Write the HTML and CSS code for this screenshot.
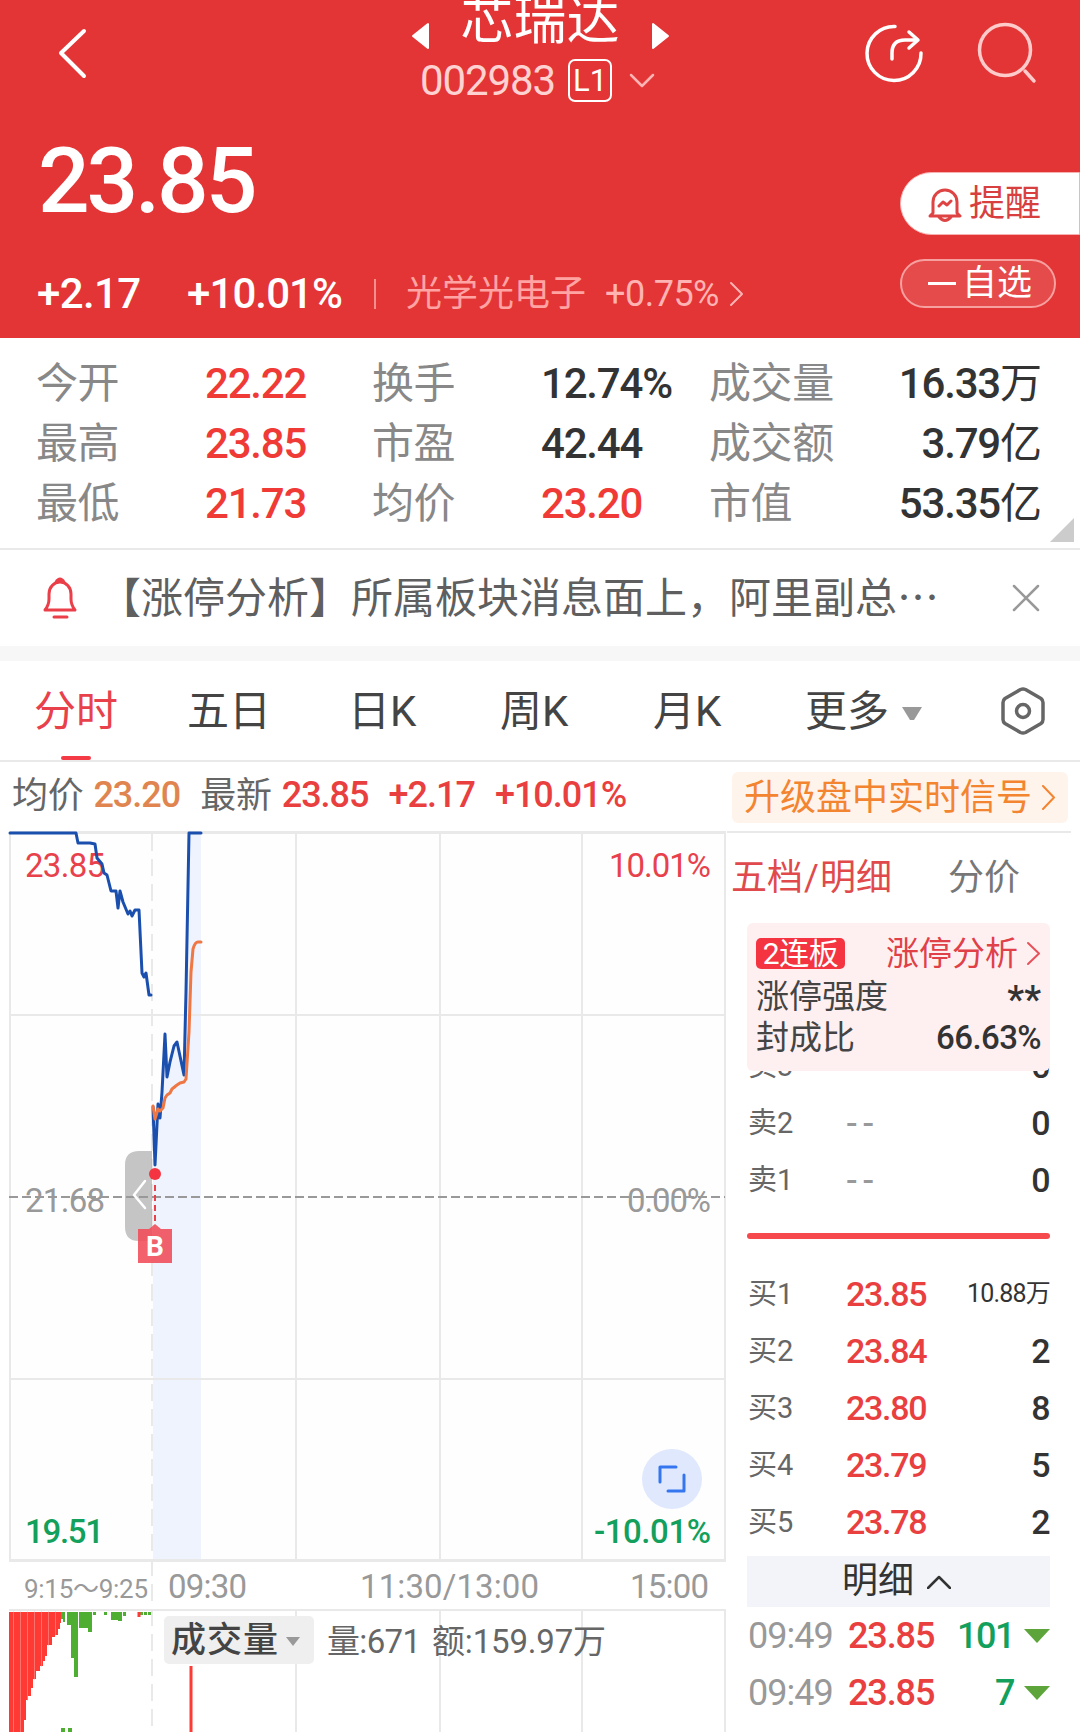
FILE: index.html
```html
<!DOCTYPE html>
<html lang="zh-CN">
<head>
  <meta charset="UTF-8">
  <title>芯瑞达 002983</title>
  <meta name="viewport" content="width=device-width,initial-scale=1">
  <link rel="stylesheet" href="styles.css">
</head>
<body>
  <!-- Header -->
  <header class="header">
    <div class="navbar">
      <svg class="back" width="34" height="56" viewBox="0 0 34 56"><path d="M29 6 6 28 29 51"/></svg>
      <div class="stock">
        <div class="stock-name">
          <svg width="18" height="28" viewBox="0 0 18 28"><path d="M17 2v24L2 14z"/></svg>
          <h1>芯瑞达</h1>
          <svg width="18" height="28" viewBox="0 0 18 28"><path d="M1 2v24l15-12z"/></svg>
        </div>
        <div class="stock-code">
          <span class="code">002983</span>
          <span class="level">L1</span>
          <svg width="26" height="16" viewBox="0 0 26 16"><path d="M2 2l11 11L24 2"/></svg>
        </div>
      </div>
      <div class="nav-icons">
        <svg width="62" height="62" viewBox="0 0 62 62">
          <path d="M32 4.500A27 27 0 1 0 58 31"/>
          <path d="M29 37v-6q0-13 13-13h11M46 10l9 8-9 8"/>
        </svg>
        <svg class="search" width="62" height="62" viewBox="0 0 62 62">
          <circle cx="29" cy="28" r="25.500"/><path d="M49 49l9 10"/>
        </svg>
      </div>
    </div>
    <div class="quote">
      <div class="quote-left">
        <div class="price">23.85</div>
        <div class="change-row">
          <span class="change">+2.17</span>
          <span class="change pct">+10.01%</span>
          <i class="divider"></i>
          <span class="sector">光学光电子</span>
          <span class="sector-pct">+0.75%</span>
          <svg width="16" height="26" viewBox="0 0 16 26"><path d="M2 2l11 11L2 24"/></svg>
        </div>
      </div>
      <div class="quote-actions">
        <div class="btn-alert">
          <svg width="34" height="36" viewBox="0 0 34 36">
            <path d="M5 27V16a12 12 0 0 1 24 0v11l3 3H2zM11 31q6 7 12 0M11 20l4-4 4 3 4-4"/>
          </svg>
          <span>提醒</span>
        </div>
        <div class="btn-fav"><i></i><span>自选</span></div>
      </div>
    </div>
  </header>

  <!-- Key numbers -->
  <section class="stats">
    <span class="k">今开</span><span class="v up">22.22</span>
    <span class="k">换手</span><span class="v">12.74%</span>
    <span class="k">成交量</span><span class="v last">16.33<small>万</small></span>
    <span class="k">最高</span><span class="v up">23.85</span>
    <span class="k">市盈</span><span class="v">42.44</span>
    <span class="k">成交额</span><span class="v last">3.79<small>亿</small></span>
    <span class="k">最低</span><span class="v up">21.73</span>
    <span class="k">均价</span><span class="v up">23.20</span>
    <span class="k">市值</span><span class="v last">53.35<small>亿</small></span>
    <i class="corner"></i>
  </section>

  <section class="notice">
    <svg width="36" height="44" viewBox="0 0 36 44">
      <path d="M3 34q4-5 4-11v-5a11 12 0 0 1 22 0v5q0 6 4 11zM14 6q4-6 8 0M12 41h13"/>
    </svg>
    <p>【涨停分析】所属板块消息面上，阿里副总<span class="dots">⋯</span></p>
    <svg class="close" width="30" height="30" viewBox="0 0 30 30"><path d="M3 3l24 24M27 3L3 27"/></svg>
  </section>

  <!-- Period tabs -->
  <nav class="tabs">
    <span class="tab active">分时</span>
    <span class="tab">五日</span>
    <span class="tab">日K</span>
    <span class="tab">周K</span>
    <span class="tab">月K</span>
    <span class="tab">更多<i class="caret"></i></span>
    <svg width="46" height="50" viewBox="0 0 46 50">
      <path d="M20.500 3.500q2.500-1 5 0L41 12.500q2 1.500 2 4v17q0 2.500-2 4L25.500 46.500q-2.500 1-5 0L5 37.500q-2-1.500-2-4v-17q0-2.500 2-4z"/>
      <circle cx="23" cy="25" r="6.500"/>
    </svg>
  </nav>

  <div class="info">
    <span class="label">均价</span><span class="num avg">23.20</span>
    <span class="label">最新</span><span class="num">23.85</span>
    <span class="num">+2.17</span><span class="num">+10.01%</span>
    <div class="upgrade">升级盘中实时信号
      <svg width="15" height="25" viewBox="0 0 15 25"><path d="M2 1l11 11.500L2 24"/></svg>
    </div>
  </div>

  <main class="main">
    <!-- Intraday chart, user units are page pixels -->
    <svg class="chart" width="727" height="901" viewBox="0 831 727 901">
      <rect class="plot" x="10" y="832" width="715" height="728"/>
      <path class="area" d="M153 1560V1107L155 1165 158 1104 160 1118 162 1092 165 1034 167 1077 170 1062 174 1046 177 1042 184 1075 186 992 189 833H201V1560z"/>
      <g class="grid">
        <path d="M9 832.500H726M9 1560.500H726" stroke-width="3"/>
        <path d="M10 1015H725M10 1379H725M10 832V1560M296 832V1560M440 832V1560M582 832V1560M725 832V1560"/>
        <path d="M9 1610H726M296 1610V1732M440 1610V1732M582 1610V1732M725 1610V1732"/>
        <path d="M152 834V1732" stroke-dasharray="17 8"/>
      </g>

      <g class="axis-label">
        <text class="up" x="25" y="877" textLength="80">23.85</text>
        <text class="up" x="609" y="877" textLength="102">10.01%</text>
        <text x="25" y="1212" textLength="80">21.68</text>
        <text x="627" y="1212" textLength="84">0.00%</text>
        <text class="down" x="25" y="1543" textLength="79">19.51</text>
        <text class="down" x="594" y="1543" textLength="117">-10.01%</text>
        <text x="168" y="1598" textLength="79">09:30</text>
        <text x="360" y="1598" textLength="179">11:30/13:00</text>
        <text x="630" y="1598" textLength="79">15:00</text>
        <text class="small" x="24" y="1598" textLength="124">9:15～9:25</text>
      </g>
      <path class="zero" d="M9 1197H725"/>

      <path class="line" d="M10 833H76L78 843H90L95 844 97 858 102 864 104 873 107 875 111 891H116L118 908 120 891 123 902 128 914 130 911 132 916 135 910H139L142 973 144 977 146 973 149 995H151"/>
      <path class="line" d="M153 1107L155 1165 158 1104 160 1118 162 1092 165 1034 167 1077 170 1062 174 1046 177 1042 184 1075 186 992 189 833H201"/>
      <path class="line avg-line" d="M153 1106L155 1119 158 1109 160 1111 163 1108 165 1098 167 1095 170 1093 172 1089 177 1085 180 1083 184 1082 186 1079 189 1032 191 972 193 949Q195 942 198 942H201"/>

      <!-- Collapse handle and buy marker -->
      <path class="handle" d="M152 1151H139Q125 1151 125 1165V1227Q125 1241 139 1241H152z"/>
      <path class="handle-arrow" d="M145 1181L134 1195 145 1208"/>
      <circle class="dot" cx="155" cy="1174" r="6"/>
      <path class="buy-line" d="M155 1185V1222"/>
      <path class="buy" d="M138 1229H149L155 1224 161 1229H172V1263H138z"/>
      <text class="buy-text" x="155" y="1256">B</text>

      <circle class="full" cx="672" cy="1479" r="30"/>
      <path class="full-icon" d="M660 1482V1467H676M684 1475V1491H668"/>

      <!-- Volume -->
      <path class="vol-up" d="M9 1612H61V1623H60V1629H58V1635H55V1637H52V1645H47V1656H45V1661H43V1666H40V1671H36V1679H33V1688H31V1696H28V1700H26V1720H24V1732H9z"/>
      <path class="vol-gap" d="M13.500 1612V1732M20.500 1612V1732M27.500 1612V1700M34.500 1612V1679M41.500 1612V1666M48.500 1612V1645M55.500 1612V1635"/>
      <path class="vol-down" d="M61 1612h4v10h-2v-3h-2zM67 1612h11v65h-4v-19h-3v-33h-4zM79 1612h13v20h-4v-4h-9zM93 1612h3v3h-3zM104 1612h3v3h-3zM111 1612h11v9h-4v-1h-7zM123 1612h3v4h-3zM140 1612h3v3h-3zM144 1612h3v3h-3zM148 1612h3v3h-3zM61 1728h4v4h-4zM68 1728h4v4h-4z"/>
      <path class="vol-up" d="M137.500 1612h3v5h-3zM189.500 1666h3v66h-3z"/>
      <rect class="vol-btn" x="164" y="1616" width="150" height="48" rx="5"/>
      <text class="vol-name" x="171" y="1652" textLength="107">成交量</text>
      <path class="vol-caret" d="M286 1637H300L293 1646z"/>
      <text class="vol-text" x="327" y="1653" textLength="94">量:671</text>
      <text class="vol-text" x="432" y="1653" textLength="174">额:159.97万</text>
    </svg>

    <!-- Order book -->
    <aside class="book">
      <div class="book-tabs"><span class="active">五档<i>/</i>明细</span><span>分价</span></div>
      <div class="limit-card">
        <div class="limit-row head">
          <span class="limit-badge">2连板</span>
          <span class="limit-link">涨停分析
            <svg width="15" height="25" viewBox="0 0 15 25"><path d="M2 2l11 10.500L2 23"/></svg>
          </span>
        </div>
        <div class="limit-row"><span>涨停强度</span><b class="stars">**</b></div>
        <div class="limit-row"><span>封成比</span><b>66.63%</b></div>
      </div>
      <div class="orders">
        <div class="order"><span>卖3</span><em class="none">--</em><b>0</b></div>
        <div class="order"><span>卖2</span><em class="none">--</em><b>0</b></div>
        <div class="order"><span>卖1</span><em class="none">--</em><b>0</b></div>
      </div>
      <div class="split"></div>
      <div class="orders">
        <div class="order"><span>买1</span><em>23.85</em><b class="long">10.88万</b></div>
        <div class="order"><span>买2</span><em>23.84</em><b>2</b></div>
        <div class="order"><span>买3</span><em>23.80</em><b>8</b></div>
        <div class="order"><span>买4</span><em>23.79</em><b>5</b></div>
        <div class="order"><span>买5</span><em>23.78</em><b>2</b></div>
      </div>
      <div class="detail-bar">明细
        <svg width="24" height="14" viewBox="0 0 24 14"><path d="M1 13L12 2l11 11"/></svg>
      </div>
      <div class="tick"><span>09:49</span><em>23.85</em><b>101</b><i></i></div>
      <div class="tick"><span>09:49</span><em>23.85</em><b>7</b><i></i></div>
    </aside>
  </main>
</body>
</html>
```
FILE: styles.css
```css
:root {
  --red: #e33536;
  --up: #e9403f;
  --down: #12a05c;
  --text: #333;
  --muted: #888;
  --line: #e9e9e9;
}
* { box-sizing: border-box; margin: 0; padding: 0; }
body {
  width: 1080px; height: 1732px; overflow: hidden;
  background: #fff; color: var(--text);
  font-family: Roboto, "Noto Sans CJK SC", sans-serif;
}
svg { display: block; flex: none; fill: none; stroke-linecap: round; stroke-linejoin: round; }
i, em { font-style: normal; }
b { font-weight: 500; }

/* Header */
.header { height: 338px; background: var(--red); color: #fff; }
.navbar {
  height: 110px; display: grid; grid-template-columns: 380px 320px 1fr;
}
.back { margin: 25px 0 0 55px; stroke: #fff; stroke-width: 4; }
.stock-name {
  height: 58px; display: flex; justify-content: center; gap: 32px;
}
.stock-name svg { margin-top: 22px; fill: #fff; stroke: #fff; stroke-width: 2; }
.stock-name h1 {
  font-size: 53px; font-weight: 400; line-height: 58px; margin-top: -8px;
}
.stock-code {
  display: flex; align-items: center; height: 45px; padding-left: 40px;
}
.code {
  width: 148px; font-size: 42px; line-height: 45px; color: #ffd2d2; letter-spacing: -1.1px;
}
.level {
  width: 44px; height: 43px; border: 2px solid #fff; border-radius: 7px;
  font-size: 31px; line-height: 39px; text-align: center; margin-right: 17px;
}
.stock-code svg { stroke: #ffb4b4; stroke-width: 2.5; }
.nav-icons { display: flex; gap: 51px; padding: 22px 0 0 163px; }
.nav-icons svg { stroke: #fff; stroke-width: 3.5; }
.nav-icons .search { stroke: #ffcaca; }

.quote { display: flex; justify-content: space-between; }
.price {
  height: 140px; padding: 16px 0 0 38px;
  font-size: 91px; line-height: 110px; font-weight: 500; letter-spacing: -3.2px;
}
.change-row { display: flex; align-items: center; height: 86px; padding: 1px 0 0 37px; }
.change { width: 150px; font-size: 42px; font-weight: 500; letter-spacing: -0.6px; line-height: 50px; }
.change.pct { width: 187px; letter-spacing: -0.9px; }
.divider { width: 2px; height: 30px; background: #f18f8f; margin-right: 30px; }
.sector { width: 199px; font-size: 36px; color: #ffa3a3; line-height: 50px; }
.sector-pct { width: 124px; font-size: 36px; color: #ffb3b3; line-height: 50px; letter-spacing: -0.5px; }
.change-row svg { stroke: #ffb3b3; stroke-width: 2; }
.quote-actions { width: 180px; padding-top: 62px; }
.btn-alert {
  display: flex; align-items: center; height: 63px; padding-left: 27px; gap: 7px;
  background: #fff; color: #d8403f; border: 1px solid #f7b1b1; border-radius: 32px 0 0 32px;
  font-size: 36px; line-height: 62px;
}
.btn-alert svg { stroke: #df4444; stroke-width: 3; }
.btn-fav {
  display: flex; align-items: center; width: 156px; height: 49px; margin-top: 24px;
  padding-left: 26px; gap: 6px; border: 2px solid #f7a0a0; border-radius: 25px;
  background: #e64b4c; font-size: 35px; line-height: 44px;
}
.btn-fav i { width: 28px; height: 3px; background: #fff; }

/* Key numbers */
.stats {
  position: relative; height: 212px; padding: 16px 38px 0 36px;
  border-bottom: 2px solid var(--line);
  display: grid; grid-template-columns: 169px 167px 169px 168px 140px 1fr;
  grid-auto-rows: 60px; line-height: 60px;
}
.k { font-size: 42px; color: var(--muted); letter-spacing: -0.4px; }
.v { font-size: 42px; font-weight: 500; letter-spacing: -1.2px; white-space: nowrap; }
.v small { font-size: 42px; font-weight: 400; letter-spacing: 0; }
.v.last { text-align: right; }
.v.up { color: #f03a36; }
.corner {
  position: absolute; right: 6px; bottom: 6px; width: 24px; height: 24px;
  background: #ccc; clip-path: polygon(100% 0, 100% 100%, 0 100%);
}

.notice {
  display: flex; align-items: center; height: 111px;
  border-bottom: 15px solid #f7f7f7; padding-left: 42px;
}
.notice svg { stroke: #ea3f48; stroke-width: 3; }
.notice p { width: 933px; padding: 2px 0 0 21px; font-size: 42px; line-height: 60px; color: #5f5f5f; white-space: nowrap; }
.notice .close { stroke: #999; stroke-width: 2.5; }

/* Tabs */
.tabs {
  display: grid; grid-template-columns: 153px 161px 152px 153px 152px 196px 1fr;
  align-items: center; height: 101px; padding-left: 34px; border-bottom: 2px solid var(--line);
}
.tab { position: relative; font-size: 42px; line-height: 99px; color: #444; white-space: nowrap; padding-top: 1px; height: 99px; }
.tab.active { color: #e8414b; }
.tab.active::after {
  content: ""; position: absolute; left: 27px; bottom: 0;
  width: 30px; height: 4px; border-radius: 2px; background: #f43a44;
}
.caret {
  display: inline-block; width: 20px; height: 13px; margin-left: 13px; vertical-align: 6px;
  background: #999; clip-path: polygon(0 0, 100% 0, 60% 100%, 40% 100%);
}
.tabs svg { stroke: #666; stroke-width: 3.5; margin-left: -1px; }

.info {
  display: flex; align-items: center; height: 69px; padding: 0 12px;
  font-size: 36px; line-height: 60px;
}
.label { color: #666; margin-right: 10px; letter-spacing: -0.3px; padding-bottom: 1px; }
.num { color: var(--up); font-size: 36px; font-weight: 500; letter-spacing: -1px; margin: 0 20px 3px 0; }
.num.avg { color: #e08550; }
.upgrade {
  display: flex; align-items: center; gap: 9px; width: 336px; height: 51px; margin: 2px 0 0 auto;
  padding-left: 12px; border-radius: 6px; background: #fff4ec; color: #f38430;
  font-size: 36px; white-space: nowrap;
}
.upgrade svg { stroke: #f38430; stroke-width: 2; }

/* Chart */
.main { display: flex; height: 901px; }
.plot { fill: #fefefe; }
.area { fill: #eef3fd; }
.grid { stroke: var(--line); stroke-width: 2; stroke-linecap: butt; }
.axis-label { font-size: 33px; fill: #999; }
.axis-label .up { fill: #e8414b; }
.axis-label .down { fill: var(--down); font-weight: 500; }
.axis-label .small { font-size: 26px; }
.zero { stroke: #999; stroke-width: 2; stroke-dasharray: 9 4; stroke-linecap: butt; }
.line { stroke: #1b4fae; stroke-width: 3; }
.avg-line { stroke: #ee7744; }
.handle { fill: #999; fill-opacity: .57; }
.handle-arrow { stroke: #fff; stroke-width: 2.5; }
.dot { fill: #f43541; }
.buy-line { stroke: #e8414b; stroke-width: 2; stroke-dasharray: 6 4; stroke-linecap: butt; }
.buy { fill: #f04b58; fill-opacity: .88; }
.buy-text { fill: #fff; font-size: 28px; font-weight: 700; text-anchor: middle; }
.full { fill: #dfe8fd; }
.full-icon { stroke: #3576f0; stroke-width: 3; }
.vol-up { fill: #ff3a35; }
.vol-gap { stroke: #ff8a85; stroke-width: .7; }
.vol-down { fill: #4dae32; }
.vol-btn { fill: #efefef; }
.vol-name { fill: #444; font-size: 35px; font-weight: 500; }
.vol-caret { fill: #999; }
.vol-text { fill: #666; font-size: 33px; }

/* Order book */
.book { width: 344px; border-top: 2px solid var(--line); }
.book-tabs {
  display: flex; justify-content: space-between; height: 90px; padding: 2px 51px 0 4px;
  font-size: 36px; line-height: 87px; color: #777;
}
.book-tabs .active { color: #e04a4c; }
.book-tabs i { padding: 0 1px; }
.limit-card {
  position: relative; z-index: 1; width: 303px; height: 148px;
  margin: 0 0 -34px 20px; padding: 10px 9px 0 9px;
  border-radius: 6px; background: #fef0f1;
}
.limit-row {
  display: flex; justify-content: space-between; align-items: center;
  height: 41px; font-size: 33px; line-height: 41px; color: #444;
}
.limit-row.head { height: 43px; padding-bottom: 2px; }
.limit-row b { color: var(--text); letter-spacing: -0.6px; }
.limit-row .stars { font-size: 38px; padding-top: 8px; letter-spacing: 0; }
.limit-badge {
  width: 89px; height: 31px; border-radius: 5px; background: #f43541; color: #fff;
  font-size: 30px; line-height: 32px; text-align: center; letter-spacing: -0.5px;
}
.limit-link { display: flex; align-items: center; gap: 8px; color: #e04048; }
.limit-link svg { stroke: #e8505a; stroke-width: 2; }
.order {
  display: grid; grid-template-columns: 98px 1fr auto; align-items: center;
  width: 303px; height: 57px; margin-left: 20px; padding: 1px 0 0 1px; line-height: 56px;
}
.order span { font-size: 29px; color: #666; }
.order em { font-size: 34px; font-weight: 500; letter-spacing: -1.3px; color: var(--up); }
.order em.none { color: #999; letter-spacing: 5px; }
.order b { font-size: 34px; letter-spacing: -0.5px; }
.order .long { font-size: 25px; font-weight: 400; letter-spacing: -0.8px; }
.split { width: 303px; height: 6px; margin: 25px 0 26px 20px; border-radius: 3px; background: #f6494e; }
.detail-bar {
  display: flex; justify-content: center; align-items: center; gap: 13px;
  width: 303px; height: 51px; margin: 6px 0 0 20px; padding-right: 4px; background: #f3f4f9;
  font-size: 36px; line-height: 51px;
}
.detail-bar svg { stroke: #333; stroke-width: 2.5; }
.tick {
  display: grid; grid-template-columns: 100px 1fr auto 26px; align-items: center;
  width: 303px; height: 57px; margin-left: 20px; padding: 1px 0 0 1px; line-height: 56px; font-size: 36px;
}
.tick span { color: #999; letter-spacing: -1px; }
.tick em { color: var(--up); font-weight: 500; letter-spacing: -1.1px; }
.tick b { color: var(--down); margin-right: 10px; letter-spacing: -1.5px; }
.tick i { height: 14px; background: #5da53b; clip-path: polygon(0 0, 100% 0, 50% 100%); }
```
